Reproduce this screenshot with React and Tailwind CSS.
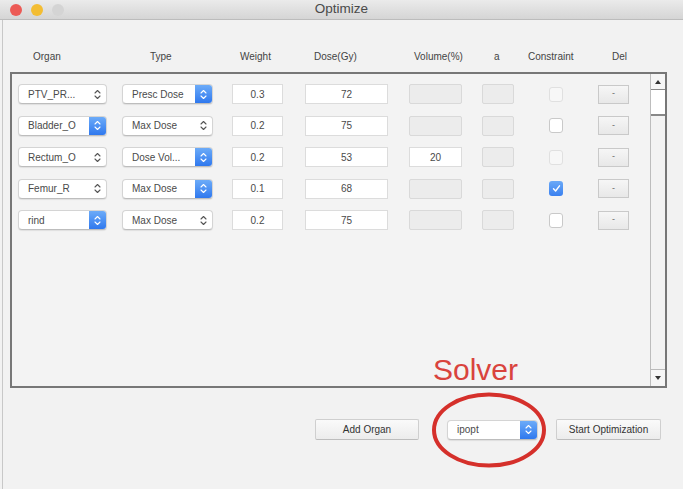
import React from 'react';

const Chevrons = ({ color = '#555' }) => (
    <svg width="7" height="11" viewBox="0 0 7 11" fill="none" stroke={color} strokeWidth="1.1" strokeLinecap="round" strokeLinejoin="round">
        <path d="M1 4 L3.5 1.5 L6 4" />
        <path d="M1 7 L3.5 9.5 L6 7" />
    </svg>
);

const Popup = ({ label, blue, width }) => (
    <div
        className="flex items-center h-[20px] bg-white rounded-[4px] border border-[#d4d4d4] border-b-[#bdbdbd] shadow-[0_1px_1px_rgba(0,0,0,0.08)] overflow-hidden"
        style={{ width }}
    >
        <span className="flex-1 pl-[9px] text-[10px] text-[#4a4a4a] truncate">{label}</span>
        {blue ? (
            <div className="h-full w-[17px] flex items-center justify-center bg-gradient-to-b from-[#6cabf8] to-[#2f78ee]">
                <Chevrons color="#ffffff" />
            </div>
        ) : (
            <div className="h-full w-[17px] flex items-center justify-center">
                <Chevrons color="#555555" />
            </div>
        )}
    </div>
);

const Field = ({ value, disabled, className }) => (
    <div
        className={`h-[20px] flex items-center justify-center text-[10px] text-[#4a4a4a] border ${
            disabled ? 'bg-[#ececec] border-[#d9d9d9] rounded-[2px]' : 'bg-white border-[#dcdcdc]'
        } ${className}`}
    >
        {value}
    </div>
);

const Checkbox = ({ state }) => {
    if (state === 'checked') {
        return (
            <div className="w-[14px] h-[15px] rounded-[3px] bg-gradient-to-b from-[#6aa9f7] to-[#3a80f0] flex items-center justify-center">
                <svg width="9" height="9" viewBox="0 0 9 9" fill="none" stroke="#fff" strokeWidth="1.4" strokeLinecap="round" strokeLinejoin="round">
                    <path d="M1.5 4.8 L3.6 7 L7.5 1.8" />
                </svg>
            </div>
        );
    }
    if (state === 'dim') {
        return <div className="w-[14px] h-[15px] rounded-[3px] bg-[#f7f7f7] border border-[#e0e0e0]" />;
    }
    return <div className="w-[14px] h-[15px] rounded-[3px] bg-white border border-[#c9c9c9]" />;
};

const rows = [
    { organ: 'PTV_PR...', organBlue: false, type: 'Presc Dose', typeBlue: true, weight: '0.3', dose: '72', volume: '', check: 'dim' },
    { organ: 'Bladder_O', organBlue: true, type: 'Max Dose', typeBlue: false, weight: '0.2', dose: '75', volume: '', check: 'off' },
    { organ: 'Rectum_O', organBlue: false, type: 'Dose Vol...', typeBlue: true, weight: '0.2', dose: '53', volume: '20', check: 'dim' },
    { organ: 'Femur_R', organBlue: false, type: 'Max Dose', typeBlue: true, weight: '0.1', dose: '68', volume: '', check: 'checked' },
    { organ: 'rind', organBlue: true, type: 'Max Dose', typeBlue: false, weight: '0.2', dose: '75', volume: '', check: 'off' },
];

const headers = [
    { label: 'Organ', w: 'w-[117px]' },
    { label: 'Type', w: 'w-[90px]' },
    { label: 'Weight', w: 'w-[74px]' },
    { label: 'Dose(Gy)', w: 'w-[100px]' },
    { label: 'Volume(%)', w: 'w-[80px]' },
    { label: 'a', w: 'w-[34px]' },
    { label: 'Constraint', w: 'w-[84px]' },
    { label: 'Del', w: 'w-[40px]' },
];

const PushButton = ({ label, className }) => (
    <button
        className={`h-[21px] text-[10px] text-[#333] bg-gradient-to-b from-[#fafafa] to-[#ececec] border border-[#cfcfcf] border-b-[#bdbdbd] rounded-[2px] ${className}`}
    >
        {label}
    </button>
);

export default function App() {
    return (
        <div
            className="relative w-[683px] h-[489px] overflow-hidden bg-[#f2f2f2]"
            style={{ fontFamily: '"Liberation Sans", Arial, sans-serif' }}
        >
            {/* title bar */}
            <div className="relative h-[20px] flex items-center pl-[10px] gap-[9px] bg-gradient-to-b from-[#ebebeb] to-[#d5d5d5] border-b border-[#bcbcbc]">
                <span className="w-[12px] h-[12px] rounded-full bg-[#ec5a55]" />
                <span className="w-[12px] h-[12px] rounded-full bg-[#f3bd33]" />
                <span className="w-[12px] h-[12px] rounded-full bg-[#d4d4d4]" />
                <span className="absolute inset-0 flex items-center justify-center text-[13.5px] text-[#4a4a4a]">Optimize</span>
            </div>

            <div className="ml-[2px] border-l border-[#c8c8c8] h-[469px]">
                {/* headers */}
                <div className="flex pl-[30px] pt-[31px] h-[43px] text-[10px] leading-[12px] text-[#444]">
                    {headers.map((h) => (
                        <span key={h.label} className={h.w}>{h.label}</span>
                    ))}
                </div>

                {/* table */}
                <div className="ml-[7px] mt-[9px] w-[657px] h-[316px] flex border-2 border-[#777] border-r-0 bg-[#f3f3f3]">
                    <div className="flex-1 flex flex-col gap-[11.5px] pt-[10px] pl-[6px]">
                        {rows.map((r, i) => (
                            <div key={i} className="flex items-center h-[20px]">
                                <Popup label={r.organ} blue={r.organBlue} width={89} />
                                <div className="ml-[15px]">
                                    <Popup label={r.type} blue={r.typeBlue} width={91} />
                                </div>
                                <Field value={r.weight} className="ml-[19px] w-[51px]" />
                                <Field value={r.dose} className="ml-[22px] w-[83px]" />
                                <Field value={r.volume} disabled={!r.volume} className="ml-[21px] w-[53px]" />
                                <Field value="" disabled className="ml-[20px] w-[32px]" />
                                <div className="ml-[35px]">
                                    <Checkbox state={r.check} />
                                </div>
                                <div className="ml-[35px] w-[31px] h-[19px] flex items-center justify-center bg-gradient-to-b from-[#f6f6f6] to-[#e8e8e8] border border-[#c9c9c9] text-[9px] text-[#666]">
                                    -
                                </div>
                            </div>
                        ))}
                    </div>

                    {/* scrollbar */}
                    <div className="w-[17px] flex flex-col border-l border-[#bdbdbd] border-r-2 border-r-[#777]">
                        <div className="h-[16px] flex items-center justify-center bg-[#f6f6f6] border-b border-[#888]">
                            <svg width="6" height="4" viewBox="0 0 6 4"><path d="M0 4 L3 0 L6 4 Z" fill="#333" /></svg>
                        </div>
                        <div className="h-[26px] bg-white border-b-2 border-[#888]" />
                        <div className="flex-1 bg-[#f3f3f3]" />
                        <div className="h-[17px] flex items-center justify-center bg-[#f6f6f6] border-t border-[#bbb]">
                            <svg width="6" height="4" viewBox="0 0 6 4"><path d="M0 0 L6 0 L3 4 Z" fill="#333" /></svg>
                        </div>
                    </div>
                </div>

                {/* bottom controls */}
                <div className="flex items-center justify-end pr-[22px] mt-[31px]">
                    <PushButton label="Add Organ" className="w-[104px]" />
                    <div className="ml-[28px]">
                        <Popup label="ipopt" blue width={91} />
                    </div>
                    <PushButton label="Start Optimization" className="ml-[18px] w-[105px]" />
                </div>
            </div>

            {/* annotation overlay */}
            <span className="absolute left-[433px] top-[353px] text-[30px] leading-[34px] text-[#d9433d]">Solver</span>
            <svg className="absolute left-[428px] top-[389px]" width="122" height="82" viewBox="0 0 122 82">
                <ellipse cx="61" cy="41" rx="55" ry="35.5" fill="none" stroke="#d5302b" strokeWidth="4" />
            </svg>
        </div>
    );
}
